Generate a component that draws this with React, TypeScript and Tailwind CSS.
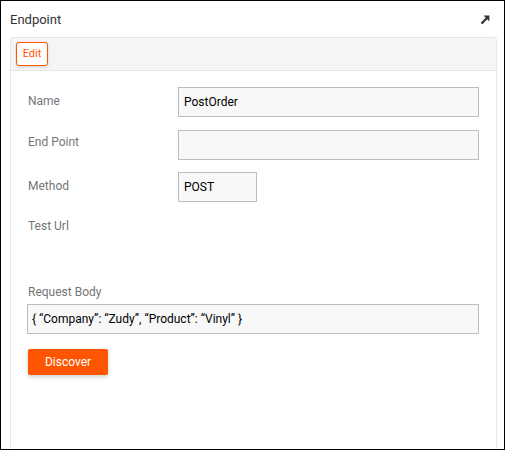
function Field({
  label,
  value,
  wide = true,
  pt = "pt-[6px]",
}: {
  label: string;
  value: string;
  wide?: boolean;
  pt?: string;
}) {
  return (
    <div className="flex">
      <div className={`w-[150px] shrink-0 text-[12px] leading-4 text-[#757575] ${pt}`}>
        {label}
      </div>
      <div
        className={`flex h-[30px] items-center border border-[#bdbdbd] bg-[#f8f8f8] px-[5px] text-[12px] text-black ${
          wide ? "w-[301px]" : "w-[79px]"
        }`}
      >
        {value}
      </div>
    </div>
  );
}

export default function App() {
  return (
    <div
      className="relative h-[450px] w-[505px] overflow-hidden border border-black bg-white"
      style={{ fontFamily: "Roboto, 'Liberation Sans', sans-serif" }}
    >
      {/* title */}
      <div className="flex h-[36px] items-center justify-between pl-[9px] pr-[14px] pt-[2px]">
        <span className="text-[13px] text-[#333]">Endpoint</span>
        <svg width="9" height="9" viewBox="0 0 9 9" className="mb-[2px]">
          <path d="M1.2 7.8 L6 3" stroke="#333" strokeWidth="2.2" strokeLinecap="square" />
          <path d="M2.6 0.6 H8.4 V6.4 Z" fill="#333" />
        </svg>
      </div>

      {/* panel */}
      <div className="ml-[9px] mr-[7px] h-[420px] rounded-t-[3px] border border-[#e6e6e6]">
        <div className="flex h-[33px] items-center border-b border-[#e6e6e6] bg-[#f5f5f5] px-[5px]">
          <button className="flex h-[24px] w-[32px] items-center justify-center rounded-[3px] border border-[#ff5500] bg-white text-[11px] text-[#ff5500] shadow-[0_1px_3px_rgba(0,0,0,0.15)]">
            Edit
          </button>
        </div>

        <div className="pl-[17px] pt-[16px]">
          <div className="flex flex-col gap-[12.5px]">
            <Field label="Name" value="PostOrder" />
            <Field label="End Point" value="" pt="pt-[4px]" />
            <Field label="Method" value="POST" wide={false} />
          </div>

          <div className="mt-[16px] text-[12px] leading-4 text-[#757575]">Test Url</div>

          <div className="mt-[50px] text-[12px] leading-4 text-[#757575]">Request Body</div>
          <div className="mt-[4px] ml-[-1px] flex h-[30px] w-[452px] items-center border border-[#bdbdbd] bg-[#f8f8f8] px-[4px] text-[12px] text-black">
            {"{ “Company”: “Zudy”, “Product”: “Vinyl” }"}
          </div>

          <button className="mt-[15px] flex h-[26px] w-[80px] items-center justify-center rounded-[2px] bg-[#ff5500] text-[12px] text-white shadow-[0_2px_4px_rgba(0,0,0,0.2)]">
            Discover
          </button>
        </div>
      </div>
    </div>
  );
}
